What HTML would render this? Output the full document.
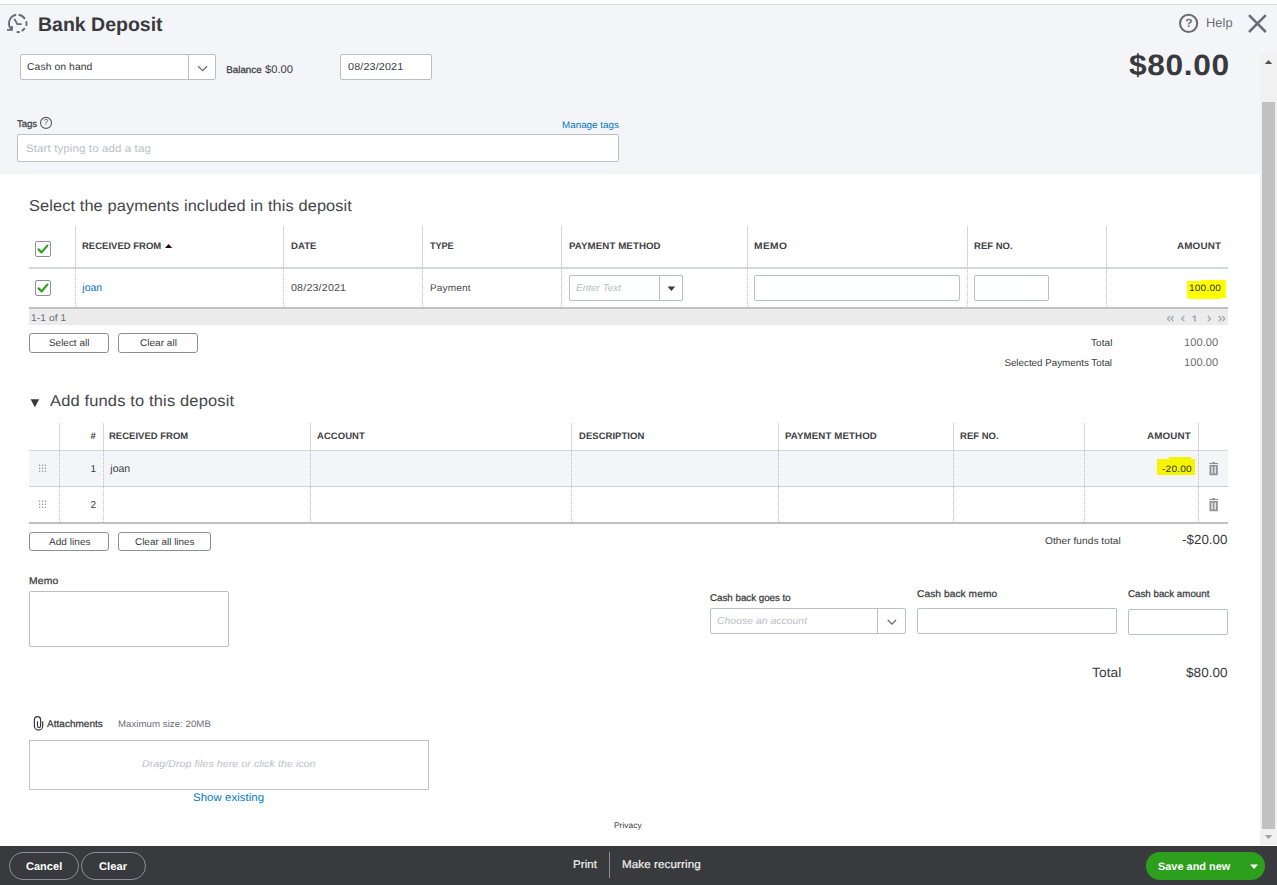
<!DOCTYPE html>
<html><head><meta charset="utf-8"><title>Bank Deposit</title>
<style>
html,body{margin:0;padding:0;width:1277px;height:885px;overflow:hidden;background:#fff;font-family:"Liberation Sans",sans-serif;color:#393a3d;position:relative}
.a{position:absolute;box-sizing:border-box}
.t{position:absolute;white-space:nowrap;line-height:normal;font-family:"Liberation Sans",sans-serif;text-rendering:geometricPrecision}
.inp{position:absolute;box-sizing:border-box;background:#fff;border:1px solid #babec5;border-radius:2px}
.btn{position:absolute;box-sizing:border-box;background:#fff;border:1px solid #8d9096;border-radius:3px}
.vd{position:absolute;width:1px;background:#d4d7dc}
.dd{position:absolute;width:1px;background:repeating-linear-gradient(to bottom,#bdbdbd 0 1px,transparent 1px 2px)}
.cb{position:absolute;box-sizing:border-box;width:16px;height:16px;border:1px solid #8d9096;border-radius:2px;background:#fff}
</style></head><body>
<!-- header -->
<div class="a" style="left:0;top:4px;width:1277px;height:1px;background:#dcdde1"></div>
<div class="a" style="left:0;top:5px;width:1277px;height:169px;background:#f4f5f8"></div>
<svg class="a" style="left:0;top:0" width="40" height="40" viewBox="0 0 40 40" fill="none" stroke="#6b6c72" stroke-width="1.9">
  <path d="M16.2 14.7 A8.8 8.8 0 0 0 11.6 29.6"/>
  <path d="M7.9 29.95 H12.0 V26.9" stroke-linecap="square" stroke-width="1.8"/>
  <path d="M18.6 14.7 A8.8 8.8 0 0 1 24.9 18.9"/>
  <path d="M26.2 21.2 A8.8 8.8 0 0 1 26.2 25.9"/>
  <path d="M24.8 27.9 A8.8 8.8 0 0 1 21.6 31.0"/>
  <path d="M16.6 32.1 H19.8" stroke-width="1.9"/>
  <path d="M14.4 18.9 L17.3 24.1 H21.7" stroke-width="1.9"/>
</svg>
<svg class="a" style="left:1170px;top:5px" width="107" height="40" viewBox="1170 5 107 40" fill="none" stroke="#6b6c72">
  <circle cx="1188.6" cy="23.4" r="8.6" stroke-width="2"/>
  <path d="M1249 15.2 L1265.8 32 M1265.8 15.2 L1249 32" stroke-width="2.5"/>
</svg>
<div class="t" style="left:1185.2px;top:15.6px;font-size:12px;font-weight:700;color:#6b6c72">?</div>
<!-- cash on hand select -->
<div class="inp" style="left:20px;top:54px;width:196px;height:26px"></div>
<div class="a" style="left:188px;top:55px;width:1px;height:24px;background:#babec5"></div>
<svg class="a" style="left:190px;top:55px" width="26" height="24" viewBox="190 55 26 24" fill="none" stroke="#6b6c72" stroke-width="1.3"><path d="M198.2 66.2 L202.6 70.6 L207 66.2"/></svg>
<div class="inp" style="left:340px;top:54px;width:92px;height:26px"></div>
<svg class="a" style="left:38px;top:115px" width="16" height="16" viewBox="38 115 16 16" fill="none" stroke="#5a5b60" stroke-width="1.1"><circle cx="46" cy="122.9" r="5.5"/></svg>
<div class="t" style="left:43.6px;top:117.4px;font-size:8.5px;color:#5a5b60">?</div>
<div class="inp" style="left:17px;top:134px;width:602px;height:28px"></div>
<!-- scrollbar -->
<div class="a" style="left:1260px;top:53px;width:17px;height:792px;background:#f1f1f1"></div>
<div class="a" style="left:1262px;top:102px;width:13px;height:727px;background:#c1c1c1"></div>
<svg class="a" style="left:1260px;top:53px" width="17" height="20" viewBox="1260 53 17 20"><path d="M1264.8 64 L1268.5 60 L1272.2 64 Z" fill="#505050"/></svg>
<svg class="a" style="left:1260px;top:828px" width="17" height="17" viewBox="1260 828 17 17"><path d="M1264.8 835 L1268.5 839 L1272.2 835 Z" fill="#a3a3a3"/></svg>

<!-- table 1 -->
<div class="vd" style="left:75px;top:226px;height:41px"></div>
<div class="vd" style="left:283px;top:226px;height:41px"></div>
<div class="vd" style="left:422px;top:226px;height:41px"></div>
<div class="vd" style="left:561px;top:226px;height:41px"></div>
<div class="vd" style="left:747px;top:226px;height:41px"></div>
<div class="vd" style="left:967px;top:226px;height:41px"></div>
<div class="vd" style="left:1106px;top:226px;height:41px"></div>
<div class="a" style="left:29px;top:267px;width:1199px;height:2px;background:#d4d7dc"></div>
<div class="dd" style="left:75px;top:269px;height:38px"></div>
<div class="dd" style="left:283px;top:269px;height:38px"></div>
<div class="dd" style="left:422px;top:269px;height:38px"></div>
<div class="dd" style="left:561px;top:269px;height:38px"></div>
<div class="dd" style="left:747px;top:269px;height:38px"></div>
<div class="dd" style="left:967px;top:269px;height:38px"></div>
<div class="dd" style="left:1106px;top:269px;height:38px"></div>
<div class="a" style="left:29px;top:307px;width:1199px;height:2px;background:#c1c1c1"></div>
<div class="a" style="left:29px;top:309px;width:1199px;height:16px;background:#ececec"></div>
<div class="cb" style="left:35px;top:241px"></div>
<div class="cb" style="left:35px;top:280px"></div>
<svg class="a" style="left:35px;top:241px" width="16" height="16" viewBox="0 0 16 16" fill="none" stroke="#2ca01c" stroke-width="2.2" stroke-linecap="round" stroke-linejoin="round"><path d="M3.6 8.4 L6.6 11.4 L12.4 4.6"/></svg>
<svg class="a" style="left:35px;top:280px" width="16" height="16" viewBox="0 0 16 16" fill="none" stroke="#2ca01c" stroke-width="2.2" stroke-linecap="round" stroke-linejoin="round"><path d="M3.6 8.4 L6.6 11.4 L12.4 4.6"/></svg>
<svg class="a" style="left:163px;top:242px" width="12" height="8" viewBox="163 242 12 8"><path d="M165 248 L168.6 244 L172.2 248 Z" fill="#111"/></svg>
<div class="inp" style="left:569px;top:275px;width:114px;height:26px"></div>
<div class="a" style="left:659px;top:276px;width:1px;height:24px;background:#babec5"></div>
<svg class="a" style="left:660px;top:276px" width="22" height="24" viewBox="660 276 22 24"><path d="M667.6 286.4 L675.2 286.4 L671.4 291 Z" fill="#393a3d"/></svg>
<div class="inp" style="left:754px;top:275px;width:206px;height:26px"></div>
<div class="inp" style="left:974px;top:275px;width:75px;height:26px"></div>
<div class="a" style="left:1187px;top:281px;width:39px;height:17px;background:#ffff00"></div><div class="a" style="left:1201px;top:280px;width:25px;height:1px;background:#ffff00"></div><div class="a" style="left:1189px;top:298px;width:32px;height:1px;background:#ffff00"></div>
<div class="btn" style="left:29px;top:333px;width:80px;height:20px"></div>
<div class="btn" style="left:118px;top:333px;width:80px;height:20px"></div>

<!-- table 2 -->
<svg class="a" style="left:28px;top:396px" width="14" height="14" viewBox="28 396 14 14"><path d="M30.6 399.2 L39.2 399.2 L34.9 407.2 Z" fill="#393a3d"/></svg>
<div class="a" style="left:29px;top:451px;width:1199px;height:35px;background:#f4f5f8"></div>
<div class="vd" style="left:59px;top:423px;height:27px"></div>
<div class="vd" style="left:103px;top:423px;height:27px"></div>
<div class="vd" style="left:310px;top:423px;height:27px"></div>
<div class="vd" style="left:571px;top:423px;height:27px"></div>
<div class="vd" style="left:778px;top:423px;height:27px"></div>
<div class="vd" style="left:953px;top:423px;height:27px"></div>
<div class="vd" style="left:1084px;top:423px;height:27px"></div>
<div class="vd" style="left:1198px;top:423px;height:27px"></div>
<div class="a" style="left:29px;top:450px;width:1199px;height:1px;background:#d4d7dc"></div>
<div class="a" style="left:29px;top:486px;width:1199px;height:1px;background:#cfcfd1"></div>
<div class="a" style="left:29px;top:522px;width:1199px;height:2px;background:#c1c1c1"></div>
<div class="dd" style="left:59px;top:451px;height:71px"></div>
<div class="dd" style="left:103px;top:451px;height:71px"></div>
<div class="dd" style="left:310px;top:451px;height:71px"></div>
<div class="dd" style="left:571px;top:451px;height:71px"></div>
<div class="dd" style="left:778px;top:451px;height:71px"></div>
<div class="dd" style="left:953px;top:451px;height:71px"></div>
<div class="dd" style="left:1084px;top:451px;height:71px"></div>
<div class="dd" style="left:1198px;top:451px;height:71px"></div>
<svg class="a" style="left:36px;top:462px" width="12" height="12" viewBox="36 462 12 12" fill="#8a8d93">
  <rect x="39" y="464.6" width="1.2" height="1.3"/><rect x="41.9" y="464.6" width="1.2" height="1.3"/><rect x="44.8" y="464.6" width="1.2" height="1.3"/>
  <rect x="39" y="467.6" width="1.2" height="1.3"/><rect x="41.9" y="467.6" width="1.2" height="1.3"/><rect x="44.8" y="467.6" width="1.2" height="1.3"/>
  <rect x="39" y="470.6" width="1.2" height="1.3"/><rect x="41.9" y="470.6" width="1.2" height="1.3"/><rect x="44.8" y="470.6" width="1.2" height="1.3"/>
</svg>
<svg class="a" style="left:36px;top:498px" width="12" height="12" viewBox="36 462 12 12" fill="#8a8d93">
  <rect x="39" y="464.6" width="1.2" height="1.3"/><rect x="41.9" y="464.6" width="1.2" height="1.3"/><rect x="44.8" y="464.6" width="1.2" height="1.3"/>
  <rect x="39" y="467.6" width="1.2" height="1.3"/><rect x="41.9" y="467.6" width="1.2" height="1.3"/><rect x="44.8" y="467.6" width="1.2" height="1.3"/>
  <rect x="39" y="470.6" width="1.2" height="1.3"/><rect x="41.9" y="470.6" width="1.2" height="1.3"/><rect x="44.8" y="470.6" width="1.2" height="1.3"/>
</svg>
<svg class="a" style="left:1206px;top:460px" width="14" height="18" viewBox="1206 460 14 18" fill="#909398" fill-rule="evenodd">
  <rect x="1209.2" y="462.9" width="8.8" height="1.2"/><rect x="1212.4" y="462" width="2.4" height="1"/>
  <path d="M1209.5 465 H1217.8 V475.2 H1209.5 Z M1211.5 466.5 V473.6 H1212.7 V466.5 Z M1214.6 466.5 V473.6 H1215.8 V466.5 Z"/>
</svg>
<svg class="a" style="left:1206px;top:496px" width="14" height="18" viewBox="1206 460 14 18" fill="#909398" fill-rule="evenodd">
  <rect x="1209.2" y="462.9" width="8.8" height="1.2"/><rect x="1212.4" y="462" width="2.4" height="1"/>
  <path d="M1209.5 465 H1217.8 V475.2 H1209.5 Z M1211.5 466.5 V473.6 H1212.7 V466.5 Z M1214.6 466.5 V473.6 H1215.8 V466.5 Z"/>
</svg>
<div class="a" style="left:1157px;top:459px;width:38px;height:16px;background:#f5f500"></div><div class="a" style="left:1169px;top:457px;width:22px;height:2px;background:#f5f500"></div>
<div class="btn" style="left:29px;top:532px;width:80px;height:19px"></div>
<div class="btn" style="left:118px;top:532px;width:93px;height:19px"></div>

<!-- bottom -->
<div class="inp" style="left:29px;top:591px;width:200px;height:56px"></div>
<div class="inp" style="left:710px;top:608px;width:196px;height:26px"></div>
<div class="a" style="left:877px;top:609px;width:1px;height:24px;background:#babec5"></div>
<svg class="a" style="left:878px;top:609px" width="28" height="24" viewBox="878 609 28 24" fill="none" stroke="#6b6c72" stroke-width="1.3"><path d="M887.8 620 L891.9 624.1 L896 620"/></svg>
<div class="inp" style="left:917px;top:608px;width:200px;height:26px"></div>
<div class="inp" style="left:1128px;top:609px;width:100px;height:26px"></div>
<svg class="a" style="left:30px;top:712px" width="16" height="22" viewBox="30 712 16 22" fill="none" stroke="#393a3d" stroke-width="1.2">
  <path d="M37.5 721.2 V726.1 A1.55 1.55 0 0 0 40.6 726.1 V719.7 A3.1 3.1 0 0 0 34.4 719.7 V726 A4.15 4.15 0 0 0 42.7 726 V721.2"/>
</svg>
<div class="a" style="left:29px;top:740px;width:400px;height:50px;border:1px solid #c4c4c4;background:#fff"></div>

<!-- footer -->
<div class="a" style="left:0;top:846px;width:1277px;height:39px;background:#393a3d"></div>
<div class="a" style="left:9px;top:852px;width:70px;height:28px;border:1px solid #8d9096;border-radius:14px"></div>
<div class="a" style="left:81px;top:852px;width:65px;height:28px;border:1px solid #8d9096;border-radius:14px"></div>
<div class="a" style="left:609px;top:852px;width:1px;height:26px;background:#8d9096"></div>
<div class="a" style="left:1146px;top:852px;width:119px;height:28px;background:#2ca01c;border-radius:14px"></div>
<svg class="a" style="left:1246px;top:860px" width="16" height="12" viewBox="1246 860 16 12"><path d="M1250.3 864.6 L1257.9 864.6 L1254.1 869 Z" fill="#fff"/></svg>
<!-- pager glyphs -->
<svg class="a" style="left:1160px;top:310px" width="70" height="15" viewBox="1160 310 70 15" fill="none" stroke="#a4a7ad" stroke-width="1.3">
  <path d="M1170 316 L1167.5 318.7 L1170 321.4 M1173.5 316 L1171 318.7 L1173.5 321.4"/>
  <path d="M1184.4 316 L1181.8 318.7 L1184.4 321.4"/>
  <path d="M1195 315.6 V321.8 M1192.6 317.2 L1195 315.8" stroke-width="1.5"/>
  <path d="M1207.8 316 L1210.4 318.7 L1207.8 321.4"/>
  <path d="M1218.8 316 L1221.3 318.7 L1218.8 321.4 M1222.3 316 L1224.8 318.7 L1222.3 321.4"/>
</svg>
<div class="t" style="left:37.58px;top:13.90px;font-size:19.6px;transform:scaleX(0.9965);transform-origin:0 0;font-weight:700;letter-spacing:-0.017px;color:#393a3d;">Bank Deposit</div>
<div class="t" style="left:1205.90px;top:16.00px;font-size:12.6px;transform:scaleX(1.0195);transform-origin:0 0;letter-spacing:0.067px;color:#6b6c72;">Help</div>
<div class="t" style="left:1128.60px;top:48.70px;font-size:29.3px;transform:scaleX(1.0821);transform-origin:0 0;font-weight:700;letter-spacing:0.575px;color:#393a3d;">$80.00</div>
<div class="t" style="left:27.31px;top:62.10px;font-size:10.1px;transform:scaleX(1.0277);transform-origin:0 0;letter-spacing:0.065px;color:#393a3d;">Cash on hand</div>
<div class="t" style="left:226.23px;top:64.90px;font-size:9.8px;color:#393a3d;-webkit-text-stroke:0.25px #393a3d;">Balance</div>
<div class="t" style="left:265.00px;top:63.90px;font-size:11.2px;color:#393a3d;">$0.00</div>
<div class="t" style="left:347.56px;top:62.20px;font-size:10.2px;transform:scaleX(1.0582);transform-origin:0 0;letter-spacing:0.132px;color:#393a3d;">08/23/2021</div>
<div class="t" style="left:17.15px;top:118.90px;font-size:9.8px;transform:scaleX(0.9813);transform-origin:0 0;letter-spacing:-0.055px;color:#393a3d;-webkit-text-stroke:0.25px #393a3d;">Tags</div>
<div class="t" style="left:25.94px;top:142.70px;font-size:10.8px;transform:scaleX(1.0620);transform-origin:0 0;letter-spacing:0.119px;color:#babec5;">Start typing to add a tag</div>
<div class="t" style="left:561.64px;top:120.00px;font-size:9.6px;transform:scaleX(1.0186);transform-origin:0 0;letter-spacing:0.043px;color:#0077c5;">Manage tags</div>
<div class="t" style="left:29.09px;top:197.80px;font-size:15.8px;transform:scaleX(1.0354);transform-origin:0 0;letter-spacing:0.105px;color:#45464a;">Select the payments included in this deposit</div>
<div class="t" style="left:82.11px;top:240.00px;font-size:9.4px;transform:scaleX(1.0094);transform-origin:0 0;font-weight:700;letter-spacing:0.026px;color:#404145;">RECEIVED FROM</div>
<div class="t" style="left:290.50px;top:240.00px;font-size:9.4px;transform:scaleX(1.0188);transform-origin:0 0;font-weight:700;letter-spacing:0.063px;color:#404145;">DATE</div>
<div class="t" style="left:429.90px;top:240.00px;font-size:9.4px;transform:scaleX(0.9769);transform-origin:0 0;font-weight:700;letter-spacing:-0.082px;color:#404145;">TYPE</div>
<div class="t" style="left:568.69px;top:240.00px;font-size:9.4px;transform:scaleX(1.0329);transform-origin:0 0;font-weight:700;letter-spacing:0.091px;color:#404145;">PAYMENT METHOD</div>
<div class="t" style="left:753.56px;top:240.00px;font-size:9.4px;transform:scaleX(1.0914);transform-origin:0 0;font-weight:700;letter-spacing:0.340px;color:#404145;">MEMO</div>
<div class="t" style="left:974.21px;top:240.00px;font-size:9.4px;transform:scaleX(1.0117);transform-origin:0 0;font-weight:700;letter-spacing:0.031px;color:#404145;">REF NO.</div>
<div class="t" style="left:1177.15px;top:240.00px;font-size:9.4px;transform:scaleX(1.0479);transform-origin:0 0;font-weight:700;letter-spacing:0.161px;color:#404145;">AMOUNT</div>
<div class="t" style="left:82.33px;top:282.00px;font-size:10.5px;color:#0077c5;">joan</div>
<div class="t" style="left:290.77px;top:282.80px;font-size:10px;transform:scaleX(1.0705);transform-origin:0 0;letter-spacing:0.155px;color:#4a4b50;">08/23/2021</div>
<div class="t" style="left:429.51px;top:282.90px;font-size:9.6px;transform:scaleX(1.0515);transform-origin:0 0;letter-spacing:0.130px;color:#4a4b50;">Payment</div>
<div class="t" style="left:576.04px;top:283.00px;font-size:9.8px;transform:scaleX(1.0127);transform-origin:0 0;font-style:italic;letter-spacing:0.027px;color:#babec5;">Enter Text</div>
<div class="t" style="left:1189.17px;top:281.90px;font-size:9.4px;transform:scaleX(1.0770);transform-origin:0 0;letter-spacing:0.171px;color:#333;">100.00</div>
<div class="t" style="left:30.66px;top:313.30px;font-size:9.8px;transform:scaleX(1.0408);transform-origin:0 0;letter-spacing:0.077px;color:#6b6c72;">1-1 of 1</div>
<div class="t" style="left:48.69px;top:337.80px;font-size:9.8px;transform:scaleX(1.0106);transform-origin:0 0;letter-spacing:0.019px;color:#393a3d;">Select all</div>
<div class="t" style="left:139.83px;top:337.80px;font-size:9.8px;transform:scaleX(1.0193);transform-origin:0 0;letter-spacing:0.035px;color:#393a3d;">Clear all</div>
<div class="t" style="left:1090.64px;top:338.00px;font-size:9.8px;transform:scaleX(1.0246);transform-origin:0 0;letter-spacing:0.051px;color:#393a3d;">Total</div>
<div class="t" style="left:1184.10px;top:337.00px;font-size:11px;transform:scaleX(1.0111);transform-origin:0 0;letter-spacing:0.031px;color:#6b6c72;">100.00</div>
<div class="t" style="left:1004.39px;top:358.20px;font-size:9.8px;color:#393a3d;">Selected Payments Total</div>
<div class="t" style="left:1184.10px;top:357.20px;font-size:11px;transform:scaleX(1.0111);transform-origin:0 0;letter-spacing:0.031px;color:#6b6c72;">100.00</div>
<div class="t" style="left:49.70px;top:393.10px;font-size:15.7px;transform:scaleX(1.0501);transform-origin:0 0;letter-spacing:0.146px;color:#45464a;">Add funds to this deposit</div>
<div class="t" style="left:90.46px;top:430.10px;font-size:9.4px;font-weight:700;color:#404145;">#</div>
<div class="t" style="left:109.41px;top:430.10px;font-size:9.4px;transform:scaleX(1.0094);transform-origin:0 0;font-weight:700;letter-spacing:0.026px;color:#404145;">RECEIVED FROM</div>
<div class="t" style="left:316.95px;top:430.10px;font-size:9.4px;transform:scaleX(1.0129);transform-origin:0 0;font-weight:700;letter-spacing:0.043px;color:#404145;">ACCOUNT</div>
<div class="t" style="left:578.70px;top:430.10px;font-size:9.4px;transform:scaleX(1.0130);transform-origin:0 0;font-weight:700;letter-spacing:0.035px;color:#404145;">DESCRIPTION</div>
<div class="t" style="left:785.39px;top:430.10px;font-size:9.4px;transform:scaleX(1.0345);transform-origin:0 0;font-weight:700;letter-spacing:0.095px;color:#404145;">PAYMENT METHOD</div>
<div class="t" style="left:960.21px;top:430.10px;font-size:9.4px;transform:scaleX(1.0117);transform-origin:0 0;font-weight:700;letter-spacing:0.031px;color:#404145;">REF NO.</div>
<div class="t" style="left:1147.15px;top:430.10px;font-size:9.4px;transform:scaleX(1.0445);transform-origin:0 0;font-weight:700;letter-spacing:0.150px;color:#404145;">AMOUNT</div>
<div class="t" style="left:90.44px;top:464.40px;font-size:10px;color:#393a3d;">1</div>
<div class="t" style="left:110.33px;top:463.40px;font-size:10.5px;color:#393a3d;">joan</div>
<div class="t" style="left:1161.58px;top:463.60px;font-size:9.3px;transform:scaleX(1.0881);transform-origin:0 0;letter-spacing:0.179px;color:#333;">-20.00</div>
<div class="t" style="left:90.44px;top:500.40px;font-size:10px;color:#393a3d;">2</div>
<div class="t" style="left:48.50px;top:537.00px;font-size:9.8px;transform:scaleX(1.0208);transform-origin:0 0;letter-spacing:0.044px;color:#393a3d;">Add lines</div>
<div class="t" style="left:135.24px;top:537.00px;font-size:9.8px;transform:scaleX(1.0089);transform-origin:0 0;letter-spacing:0.016px;color:#393a3d;">Clear all lines</div>
<div class="t" style="left:1045.23px;top:535.90px;font-size:9.8px;transform:scaleX(1.0319);transform-origin:0 0;letter-spacing:0.059px;color:#393a3d;">Other funds total</div>
<div class="t" style="left:1181.78px;top:531.90px;font-size:13.2px;transform:scaleX(1.0123);transform-origin:0 0;letter-spacing:0.038px;color:#393a3d;">-$20.00</div>
<div class="t" style="left:28.69px;top:576.10px;font-size:9.8px;transform:scaleX(1.0547);transform-origin:0 0;letter-spacing:0.193px;color:#393a3d;-webkit-text-stroke:0.25px #393a3d;">Memo</div>
<div class="t" style="left:709.54px;top:593.00px;font-size:9.8px;transform:scaleX(0.9964);transform-origin:0 0;letter-spacing:-0.008px;color:#393a3d;-webkit-text-stroke:0.25px #393a3d;">Cash back goes to</div>
<div class="t" style="left:716.72px;top:615.90px;font-size:10px;transform:scaleX(1.0313);transform-origin:0 0;font-style:italic;letter-spacing:0.070px;color:#babec5;">Choose an account</div>
<div class="t" style="left:916.82px;top:589.30px;font-size:9.8px;transform:scaleX(1.0353);transform-origin:0 0;letter-spacing:0.085px;color:#393a3d;-webkit-text-stroke:0.25px #393a3d;">Cash back memo</div>
<div class="t" style="left:1127.94px;top:589.30px;font-size:9.8px;transform:scaleX(0.9975);transform-origin:0 0;letter-spacing:-0.006px;color:#393a3d;-webkit-text-stroke:0.25px #393a3d;">Cash back amount</div>
<div class="t" style="left:1091.99px;top:665.00px;font-size:13.4px;transform:scaleX(1.0254);transform-origin:0 0;letter-spacing:0.072px;color:#393a3d;">Total</div>
<div class="t" style="left:1186.20px;top:665.00px;font-size:13.3px;transform:scaleX(1.0165);transform-origin:0 0;letter-spacing:0.056px;color:#393a3d;">$80.00</div>
<div class="t" style="left:46.70px;top:719.00px;font-size:9.8px;transform:scaleX(1.0173);transform-origin:0 0;letter-spacing:0.039px;color:#393a3d;-webkit-text-stroke:0.25px #393a3d;">Attachments</div>
<div class="t" style="left:117.75px;top:718.00px;font-size:9.4px;transform:scaleX(1.0252);transform-origin:0 0;letter-spacing:0.055px;color:#6b6c72;">Maximum size: 20MB</div>
<div class="t" style="left:142.24px;top:759.20px;font-size:10px;transform:scaleX(1.0540);transform-origin:0 0;font-style:italic;letter-spacing:0.095px;color:#babec5;">Drag/Drop files here or click the icon</div>
<div class="t" style="left:193.34px;top:791.80px;font-size:11px;transform:scaleX(1.0334);transform-origin:0 0;letter-spacing:0.077px;color:#0077c5;">Show existing</div>
<div class="t" style="left:614.35px;top:820.90px;font-size:8.2px;transform:scaleX(1.0202);transform-origin:0 0;letter-spacing:0.037px;color:#393a3d;">Privacy</div>
<div class="t" style="left:25.66px;top:861.00px;font-size:11px;transform:scaleX(1.0024);transform-origin:0 0;font-weight:700;letter-spacing:0.007px;color:#fff;">Cancel</div>
<div class="t" style="left:98.65px;top:861.00px;font-size:11px;transform:scaleX(1.0151);transform-origin:0 0;font-weight:700;letter-spacing:0.043px;color:#fff;">Clear</div>
<div class="t" style="left:572.60px;top:859.20px;font-size:11.2px;transform:scaleX(1.0286);transform-origin:0 0;letter-spacing:0.066px;color:#f0f0f0;-webkit-text-stroke:0.2px #f0f0f0;">Print</div>
<div class="t" style="left:621.99px;top:859.20px;font-size:11.2px;transform:scaleX(1.0384);transform-origin:0 0;letter-spacing:0.089px;color:#f0f0f0;-webkit-text-stroke:0.2px #f0f0f0;">Make recurring</div>
<div class="t" style="left:1158.33px;top:860.90px;font-size:10.8px;transform:scaleX(1.0089);transform-origin:0 0;font-weight:700;letter-spacing:0.024px;color:#fff;">Save and new</div>
</body></html>
